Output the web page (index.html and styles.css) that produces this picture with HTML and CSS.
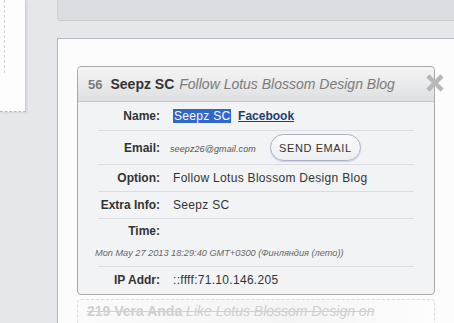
FILE: index.html
```html
<!DOCTYPE html>
<html lang="en">
<head>
    <meta charset="UTF-8">
    <title>Entries</title>
    <link rel="stylesheet" href="styles.css">
</head>
<body>
    <div class="side">
        <div class="paper"><div class="stub"></div></div>
    </div>
    <div class="content">
        <div class="toolbar"></div>
        <div class="panel">
            <div class="entry">
                <div class="entry-head">
                    <span class="num">56</span>
                    <span class="who">Seepz SC</span>
                    <span class="what">Follow Lotus Blossom Design Blog</span>
                    <svg class="close" width="18" height="18" viewBox="0 0 18 18">
                        <path d="M3.5 3.5 L14.5 14.5 M14.5 3.5 L3.5 14.5" stroke="#b8b8b8" stroke-width="4.5" stroke-linecap="square"/>
                    </svg>
                </div>
                <div class="entry-body">
                    <div class="row row-name">
                        <div class="label">Name:</div>
                        <div class="value"><span class="picked">Seepz SC</span> <a href="#" class="fb">Facebook</a></div>
                    </div>
                    <div class="row row-email">
                        <div class="label">Email:</div>
                        <div class="value"><span class="mail">seepz26@gmail.com</span><button class="send">SEND EMAIL</button></div>
                    </div>
                    <div class="row">
                        <div class="label">Option:</div>
                        <div class="value">Follow Lotus Blossom Design Blog</div>
                    </div>
                    <div class="row">
                        <div class="label">Extra Info:</div>
                        <div class="value">Seepz SC</div>
                    </div>
                    <div class="row row-time">
                        <div class="label">Time:</div>
                        <div class="value"></div>
                        <div class="stamp">Mon May 27 2013 18:29:40 GMT+0300 (Финляндия (лето))</div>
                    </div>
                    <div class="row last">
                        <div class="label">IP Addr:</div>
                        <div class="value">::ffff:71.10.146.205</div>
                    </div>
                </div>
            </div>
            <div class="entry ghost">
                <div class="ghost-head">219 <b>Vera Anda</b> <i>Like Lotus Blossom Design on</i></div>
            </div>
        </div>
    </div>
</body>
</html>
```

FILE: styles.css
```css
body {
    margin: 0;
    background: #e6e7eb;
    font-family: "Liberation Sans", Arial, sans-serif;
    color: #333;
    display: flex;
    height: 323px;
    overflow: hidden;
}
.side {
    width: 26px;
    flex-shrink: 0;
}
.paper {
    width: 25px;
    height: 111px;
    background: #fdfdfd;
    border-right: 1px solid #c9ccd3;
    border-bottom: 1px dashed #b9bbc0;
    box-shadow: 1px 1px 2px rgba(0, 0, 0, 0.08);
}
.stub {
    margin-left: 4px;
    height: 73px;
    border-left: 1px dashed #d2d2d2;
}
.content {
    margin-left: 31px;
    flex: 1;
    min-width: 0;
}
.toolbar {
    height: 20px;
    background: #dcdde2;
    border-bottom: 1px solid #c9cbd2;
    border-left: 1px solid #cfd1d7;
    border-bottom-left-radius: 3px;
}
.panel {
    margin-top: 17px;
    background: #fcfcfc;
    border-top: 1px solid #b4b9ca;
    border-left: 1px solid #b4b9ca;
    padding: 27px 0 0 19px;
    height: 300px;
}
.entry {
    width: 356px;
    border: 1px solid #a9a9a9;
    border-radius: 4px;
    background: #f2f3f5;
}
.entry-head {
    position: relative;
    height: 34px;
    display: flex;
    align-items: center;
    padding-left: 10px;
    background: linear-gradient(#f5f5f5, #dedfe1);
    border-bottom: 1px solid #c9c9c9;
    border-radius: 4px 4px 0 0;
    white-space: nowrap;
}
.num {
    font-size: 13px;
    font-weight: bold;
    color: #7a7a7a;
    margin-right: 8px;
}
.who {
    font-size: 14px;
    font-weight: bold;
    color: #333;
    margin-right: 5px;
}
.what {
    font-size: 14px;
    font-style: italic;
    color: #7b7b7b;
}
.close {
    position: absolute;
    right: -10px;
    top: 7px;
    filter: blur(0.4px);
}
.entry-body {
    padding: 0 20px;
}
.row {
    display: grid;
    grid-template-columns: 62px 1fr;
    column-gap: 13px;
    align-items: center;
    border-bottom: 1px solid #dcdde1;
    font-size: 12px;
    line-height: 16px;
    padding: 5px 0;
}
.row.last {
    border-bottom: none;
    padding: 5px 0 6px;
}
.row-name {
    padding: 6px 0;
}
.row-email {
    padding: 3px 0;
}
.row-time {
    padding: 4px 0 7px;
}
.label {
    font-weight: bold;
    text-align: right;
    color: #333;
}
.value {
    color: #333;
    letter-spacing: 0.3px;
}
.picked {
    background: #3267c9;
    color: #fff;
    padding: 0 1px;
}
.fb {
    font-weight: bold;
    color: #1c3f6e;
    margin-left: 3px;
    letter-spacing: 0;
}
.mail {
    margin-left: -3px;
    font-size: 9px;
    font-style: italic;
    color: #555;
    letter-spacing: 0.1px;
}
.send {
    margin-left: 14px;
    height: 27px;
    width: 91px;
    border: 1px solid #aab2c8;
    border-radius: 14px;
    background: linear-gradient(#fbfbfc, #eceef2);
    font-family: "Liberation Sans", Arial, sans-serif;
    font-size: 11px;
    letter-spacing: 0.6px;
    color: #333;
    box-shadow: 0 1px 1px rgba(120, 130, 160, 0.3);
}
.stamp {
    grid-column: 1 / 3;
    margin: 8px 0 0 -3px;
    font-size: 9.2px;
    font-style: italic;
    color: #666;
    line-height: 12px;
}
.ghost {
    margin-top: 4px;
    height: 40px;
    border: 1px dashed #dadada;
    background: linear-gradient(90deg, #fafafa, #f4f4f4 60%, #fdfdfd);
}
.ghost-head {
    padding: 3px 0 0 9px;
    font-size: 14px;
    color: #cfcfcf;
    font-weight: bold;
    text-decoration: line-through;
    white-space: nowrap;
}
.ghost-head i {
    font-weight: normal;
}
```
